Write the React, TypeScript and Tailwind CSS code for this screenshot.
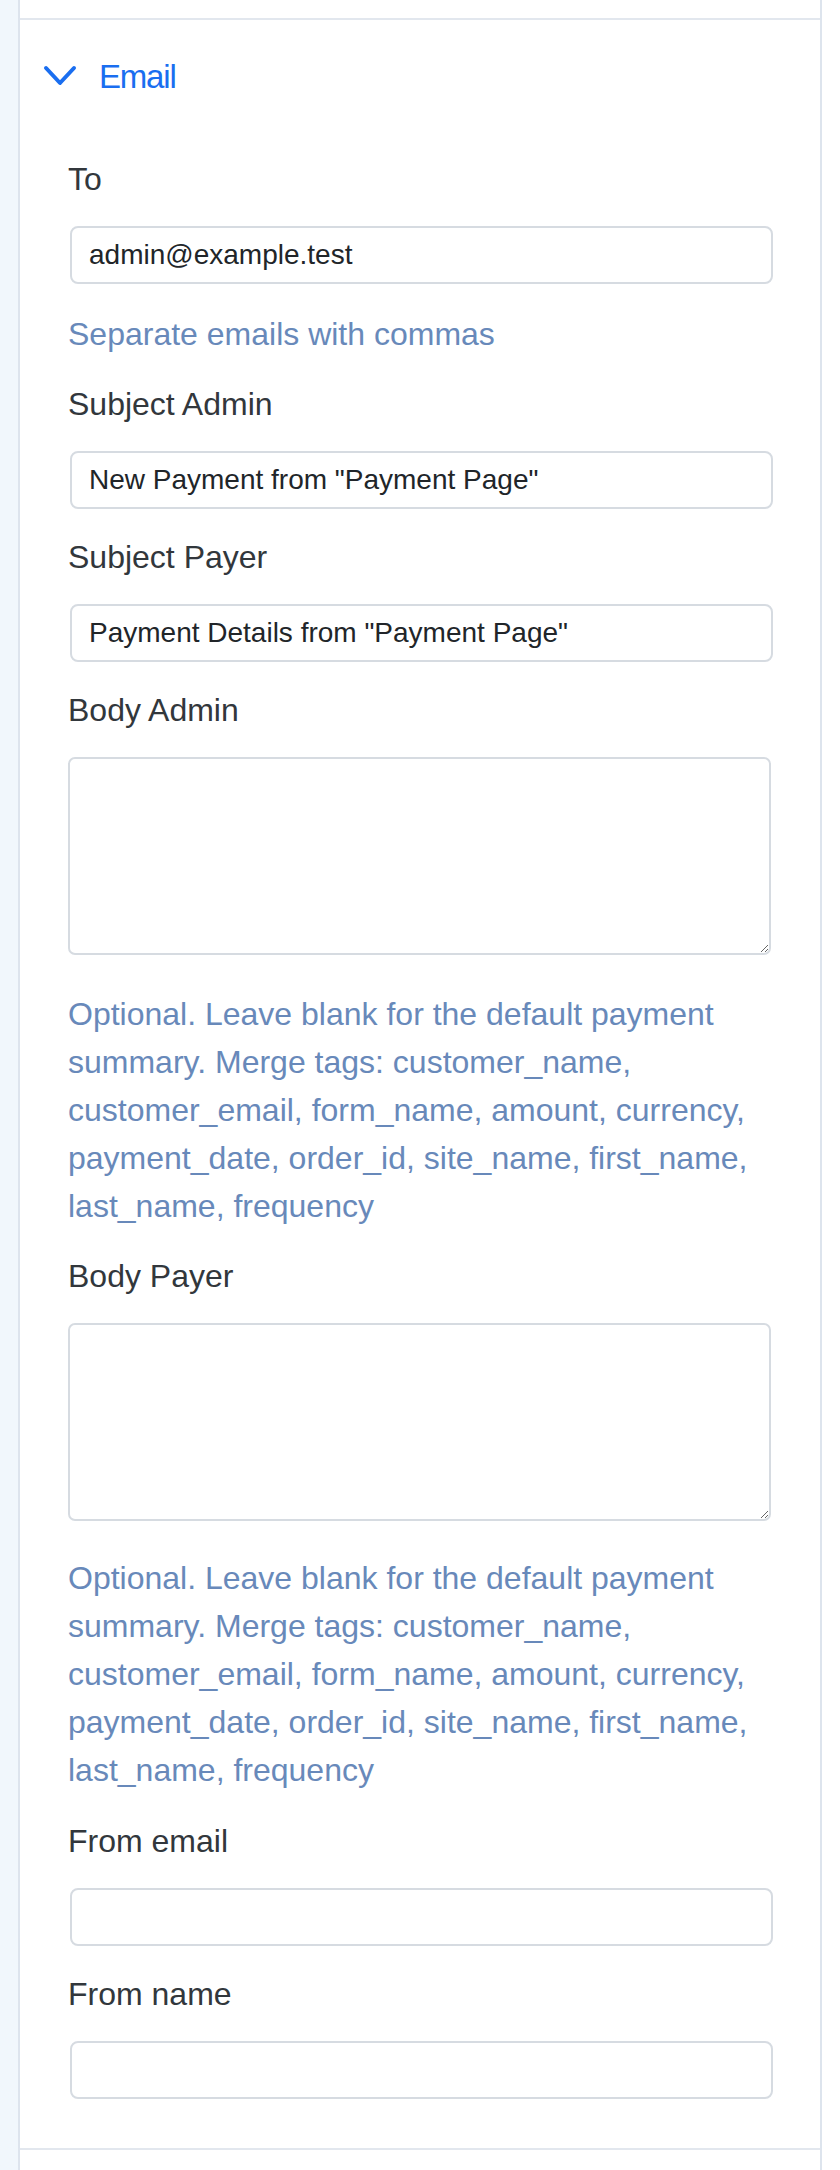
import React from "react";

const font = { fontFamily: '"Liberation Sans", Arial, sans-serif' };

function Label({ children, top }: { children: React.ReactNode; top: string }) {
  return (
    <div className={`${top} mb-[23px] text-[32px] leading-[48px] text-[#32373c]`}>{children}</div>
  );
}

function Input({ value }: { value?: string }) {
  return (
    <input
      type="text"
      defaultValue={value}
      className="ml-[2px] block h-[58px] w-[calc(100%-1px)] rounded-[8px] border-2 border-[#d6dbe1] bg-white px-[17px] text-[28px] text-[#212529] outline-none"
      style={font}
    />
  );
}

function Area() {
  return (
    <textarea
      className="block h-[198px] w-[calc(100%-1px)] rounded-[7px] border-2 border-[#d6dbe1] bg-white px-[16px] py-[10px] text-[28px] text-[#212529] outline-none"
      style={font}
    />
  );
}

function Help({ children, top }: { children: React.ReactNode; top: string }) {
  return <div className={`${top} text-[32px] leading-[48px] text-[#6889ba]`}>{children}</div>;
}

const merge =
  "Optional. Leave blank for the default payment summary. Merge tags: customer_name, customer_email, form_name, amount, currency, payment_date, order_id, site_name, first_name, last_name, frequency";

export default function App() {
  return (
    <div className="flex min-h-[2170px] w-[840px] bg-white" style={font}>
      <div className="w-[18px] shrink-0 bg-[#f1f7fc]" />
      <div className="flex w-[804px] shrink-0 flex-col border-x-2 border-[#dde4ed] bg-white">
        <div className="h-[18px]" />
        <div className="border-t-2 border-[#e2e7ee]" />
        <div className="flex items-start pl-[22px] pt-[33px]">
          <svg width="36" height="24" viewBox="0 0 36 24" className="mt-[11px] shrink-0">
            <polyline
              points="4,4 18,19 32,4"
              fill="none"
              stroke="#1a6ef0"
              strokeWidth="4"
              strokeLinecap="round"
              strokeLinejoin="round"
            />
          </svg>
          <div className="ml-[21px] text-[33px] leading-[48px] tracking-[-1.2px] text-[#1a6ef0]">Email</div>
        </div>
        <div className="px-[48px]">
          <Label top="mt-[54px]">To</Label>
          <Input value="admin@example.test" />
          <Help top="mt-[26px]">Separate emails with commas</Help>

          <Label top="mt-[22px]">Subject Admin</Label>
          <Input value={'New Payment from "Payment Page"'} />

          <Label top="mt-[24px]">Subject Payer</Label>
          <Input value={'Payment Details from "Payment Page"'} />

          <Label top="mt-[24px]">Body Admin</Label>
          <Area />
          <Help top="mt-[35px]">{merge}</Help>

          <Label top="mt-[22px]">Body Payer</Label>
          <Area />
          <Help top="mt-[33px]">{merge}</Help>

          <Label top="mt-[23px]">From email</Label>
          <Input />

          <Label top="mt-[24px]">From name</Label>
          <Input />
        </div>
        <div className="mt-[49px] border-t-2 border-[#e2e7ee]" />
        <div className="h-[20px]" />
      </div>
      <div className="flex-1 bg-white" />
    </div>
  );
}
